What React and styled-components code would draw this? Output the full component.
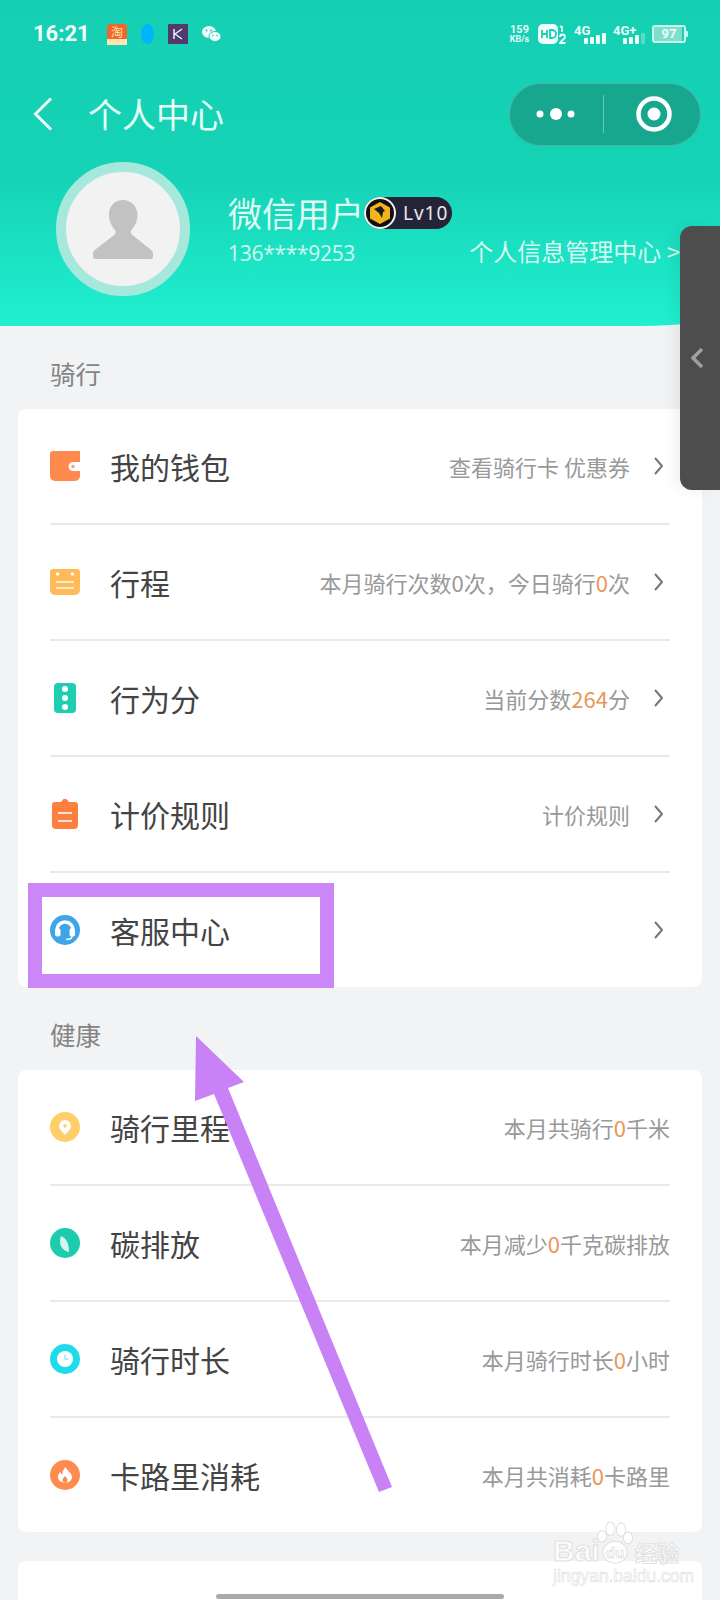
import React from 'react';
import styled, { createGlobalStyle } from 'styled-components';

const Global = createGlobalStyle`
  html, body { margin: 0; padding: 0; background: #f2f3f5; }
  * { box-sizing: border-box; }
`;
const CJK = `"Noto Sans CJK SC", "Noto Sans", sans-serif`;

const Page = styled.div`
  position: relative; width: 720px; height: 1600px; overflow: hidden;
  background: #f2f3f5; font-family: ${CJK};
`;
const Header = styled.header`
  height: 326px; padding-top: 23px;
  background: linear-gradient(180deg, #15cfb3 0%, #16d3b6 55%, #20f0d0 100%);
  border-bottom-right-radius: 80px 14px;
  color: #fff; display: flex; flex-direction: column;
`;
const StatusBar = styled.div`
  height: 22px; padding: 0 32px 0 33px; display: flex; align-items: center; justify-content: space-between;
`;
const StatusGroup = styled.div`display: flex; align-items: center; gap: ${p => p.$gap || 14}px;`;
const Time = styled.span`
  font: 700 22px/22px "Roboto", sans-serif; color: #effcf9; margin-right: 2px; width: 58px;
`;
const Speed = styled.div`
  display: flex; flex-direction: column; align-items: center; width: 23px;
  font: 700 11px/10px "Roboto", sans-serif; color: #e8fbf6;
  small { font-size: 9px; line-height: 9px; }
`;
const Sim = styled.div`
  position: relative; width: 32px; height: 20px;
  font: 700 13px/13px "Roboto", sans-serif; color: #eefcf8;
`;
const SimBars = styled.svg`position: absolute; right: 0; bottom: 0;`;
const Battery = styled.div`
  position: relative; width: 34px; height: 18px; margin-right: 2px; border: 2px solid #c9f5ec; border-radius: 3px;
  background: linear-gradient(90deg, #7fdfcc 0%, #7fdfcc 92%, transparent 92%);
  color: #effcf9; font: 700 13px/14px "Roboto", sans-serif; text-align: center;
  &::after {
    content: ""; position: absolute; right: -4px; top: 4px; width: 2px; height: 6px;
    border-radius: 0 1px 1px 0; background: #c9f5ec;
  }
`;
const Nav = styled.nav`
  margin-top: 38px; height: 62px; padding: 0 19px 0 33px; display: flex; align-items: center;
`;
const NavTitle = styled.h1`
  margin: 0 0 0 35px; font: 400 34px/62px ${CJK}; color: #e6fbf6; flex: 1;
`;
const Capsule = styled.div`
  width: 192px; height: 63px; border-radius: 32px; border: 1px solid rgba(255,255,255,.18);
  background: #17a78f; display: flex; align-items: center; flex: none;
`;
const CapsuleCell = styled.div`
  flex: 1; height: 38px; display: flex; align-items: center; justify-content: center;
  & + & { border-left: 1px solid rgba(255,255,255,.35); padding-left: 4px; }
`;
const Profile = styled.div`
  margin-top: 17px; padding: 0 40px 0 56px; display: flex; align-items: center;
`;
const Avatar = styled.div`
  width: 134px; height: 134px; border-radius: 50%; background: #f2f2f2; border: 10px solid #a6e9dc;
  display: flex; align-items: center; justify-content: center; flex: none;
`;
const Info = styled.div`flex: 1; margin-left: 38px; padding-top: 2px;`;
const NameRow = styled.div`display: flex; align-items: center; height: 40px;`;
const Name = styled.span`font: 400 34px/42px ${CJK}; color: #dff9f3;`;
const Badge = styled.div`
  width: 88px; height: 32px; border-radius: 16px; background: #242338;
  display: flex; align-items: center; position: relative;
`;
const BadgeCoin = styled.svg`flex: none;`;
const BadgeText = styled.span`
  margin-left: 7px; font: 400 19px/32px "Noto Sans", sans-serif; color: #e8e8ee; letter-spacing: 1px;
`;
const SubRow = styled.div`
  display: flex; align-items: center; justify-content: space-between; margin-top: 1px; height: 34px;
`;
const Phone = styled.span`
  margin-top: 5px; font: 400 21px/34px "Noto Sans", sans-serif; letter-spacing: -0.3px; color: #c8f6ec;
`;
const Manage = styled.span`font: 400 24px/34px ${CJK}; color: #d5f8f0; white-space: nowrap; margin-right: 0;`;

const SectionLabel = styled.div`
  height: 83px; padding: 10px 0 0 50px; display: flex; align-items: center;
  font: 400 25.5px/30px ${CJK}; color: #848484;
`;
const Card = styled.section`
  margin: 0 18px; background: #fff; border-radius: 8px; padding: 0 32px;
`;
const Row = styled.div`
  height: ${p => p.$last ? 114 : 116}px; display: flex; align-items: center;
  border-bottom: ${p => p.$last ? 'none' : '2px solid #e9e9e9'};
`;
const IconSlot = styled.div`width: 60px; flex: none; display: flex; align-items: center;`;
const Title = styled.span`font: 400 30px/40px ${CJK}; color: #444; flex: 1;`;
const Detail = styled.span`font: 400 22px/30px ${CJK}; color: #999; white-space: nowrap;`;
const Num = styled.span`color: #e9965a;`;
const Chevron = styled.svg`margin: 0 7px 0 24px; flex: none;`;
const NextCard = styled.section`
  margin: 29px 18px 0; height: 60px; background: #fff; border-radius: 8px 8px 0 0;
`;
const SidePanel = styled.div`
  position: absolute; right: 0; top: 226px; width: 40px; height: 264px; background: #4d4d4d;
  border-radius: 12px 0 0 12px; box-shadow: -6px 0 14px rgba(0,0,0,.06);
  display: flex; align-items: center; padding: 0 0 0 10px;
`;
const Highlight = styled.div`
  position: absolute; left: 28px; top: 883px; width: 306px; height: 105px; border: 14px solid #cb87f8;
`;
const Arrow = styled.svg`position: absolute; left: 0; top: 0; pointer-events: none;`;
const HomeBar = styled.div`
  position: absolute; left: 216px; top: 1594px; width: 288px; height: 5px; border-radius: 3px; background: #aaa;
`;
const Watermark = styled.div`
  position: absolute; left: 552px; top: 1522px; width: 134px; height: 70px;
`;
const WmBrand = styled.span`
  position: absolute; left: 1px; top: 12px; font: 700 30px/34px "Liberation Sans", sans-serif;
  color: rgba(255,255,255,.9); -webkit-text-stroke: 1px #e0e0e0;
`;
const WmDu = styled.span`
  position: absolute; left: 54px; top: 22px; font: 700 15px/18px "Liberation Sans", sans-serif;
  color: rgba(255,255,255,.9); -webkit-text-stroke: .6px #d8d8d8;
`;
const WmCn = styled.span`
  position: absolute; left: 83px; top: 14px; font: 700 22px/30px ${CJK};
  color: rgba(255,255,255,.9); -webkit-text-stroke: 1px #e0e0e0; white-space: nowrap;
`;
const WmUrl = styled.span`
  position: absolute; left: 1px; top: 44px; font: 400 17.5px/20px "Liberation Sans", sans-serif;
  color: rgba(255,255,255,.9); -webkit-text-stroke: .6px #dedede; white-space: nowrap;
`;
const WmPaw = styled.svg`position: absolute; left: 44px; top: 0;`;

const WalletIcon = () => (
  <svg width="30" height="30" viewBox="0 0 30 30">
    <path d="M0 3a3 3 0 0 1 3-3h27v11h-7a4.500 4.500 0 0 0 0 9h7v5a5 5 0 0 1-5 5H5a5 5 0 0 1-5-5z" fill="#ff8a4e" />
    <circle cx="23" cy="15.500" r="1.700" fill="#e9a57f" />
  </svg>
);
const PlanIcon = () => (
  <svg width="30" height="27" viewBox="0 0 30 27">
    <path d="M3 0h24a3 3 0 0 1 3 3v18a5 5 0 0 1-5 5H5a5 5 0 0 1-5-5V3a3 3 0 0 1 3-3z" fill="#ffbb59" />
    <circle cx="7.500" cy="5" r="1.700" fill="#fff" /><circle cx="22.500" cy="5" r="1.700" fill="#fff" />
    <rect x="6" y="12" width="18" height="2" fill="#ffe9c6" /><rect x="6" y="18" width="18" height="2" fill="#ffe9c6" />
  </svg>
);
const ScoreIcon = () => (
  <svg width="30" height="30" viewBox="0 0 30 30">
    <rect x="4" y="0" width="22" height="30" rx="4" fill="#1fcdb0" />
    <circle cx="15" cy="6" r="3" fill="#fff" /><circle cx="15" cy="15" r="3" fill="#fff" /><circle cx="15" cy="24" r="3" fill="#fff" />
  </svg>
);
const ClipIcon = () => (
  <svg width="30" height="30" viewBox="0 0 30 30">
    <path d="M5 3h6l2.500-3h3L19 3h6a3 3 0 0 1 3 3v20a4 4 0 0 1-4 4H6a4 4 0 0 1-4-4V6a3 3 0 0 1 3-3z" fill="#ff7f41" />
    <rect x="8" y="13" width="14" height="2" fill="#ffe3d3" /><rect x="8" y="21" width="14" height="2" fill="#ffe3d3" />
  </svg>
);
const CircleIcon = ({ color, children }) => (
  <svg width="30" height="30" viewBox="0 0 30 30"><circle cx="15" cy="15" r="15" fill={color} />{children}</svg>
);
const Headset = () => (
  <CircleIcon color="#3fa5e8">
    <path d="M7 15a8 8 0 0 1 16 0" fill="none" stroke="#fff" strokeWidth="3.500" />
    <rect x="5" y="13" width="5.500" height="8.500" rx="2.500" fill="#fff" /><rect x="19.500" y="13" width="5.500" height="8.500" rx="2.500" fill="#fff" />
    <path d="M22 21c0 2.500-3 3.500-6 3.500" fill="none" stroke="#fff" strokeWidth="1.500" />
  </CircleIcon>
);
const Pin = () => (
  <CircleIcon color="#ffcd69">
    <path d="M15 23c-3-3.500-6-6-6-9a6 6 0 0 1 12 0c0 3-3 5.500-6 9z" fill="#fff" />
    <circle cx="15" cy="14" r="1.800" fill="#ffcd69" />
  </CircleIcon>
);
const Leaf = () => (
  <CircleIcon color="#1fcbad">
    <path d="M11 8c5 2 8 7 8 16-5-1-9-5-9-10 0-2 0-4 1-6z" fill="#d6f5ee" />
  </CircleIcon>
);
const Clock = () => (
  <CircleIcon color="#1fdcea">
    <circle cx="15" cy="15" r="8" fill="#fff" />
    <path d="M15 10.500V15h3.500" fill="none" stroke="#8fe9f1" strokeWidth="1.300" />
  </CircleIcon>
);
const Flame = () => (
  <CircleIcon color="#ff8b4f">
    <path d="M15.500 7c.6 3 6.500 5.500 6.500 10 0 3.300-2.800 5.500-7 5.500s-7-2.200-7-5.500c0-2.500 1.300-4 2.500-5 .2 1.300.8 2.200 1.700 2.600C12.300 11.800 13.500 9 15.500 7z" fill="#fff" />
    <path d="M15 22.500c-1.500 0-2.500-1-2.500-2.500s1.500-2.500 2.500-4c1 1.500 2.500 2.500 2.500 4s-1 2.500-2.500 2.500z" fill="#ff8b4f" />
  </CircleIcon>
);
const Next = () => (
  <Chevron width="9" height="18" viewBox="0 0 9 18">
    <path d="M1 1l7 8-7 8" fill="none" stroke="#777" strokeWidth="2" />
  </Chevron>
);

const ride = [
  { icon: <WalletIcon />, title: '我的钱包', detail: '查看骑行卡 优惠券' },
  { icon: <PlanIcon />, title: '行程', detail: <>本月骑行次数0次，今日骑行<Num>0</Num>次</> },
  { icon: <ScoreIcon />, title: '行为分', detail: <>当前分数<Num>264</Num>分</> },
  { icon: <ClipIcon />, title: '计价规则', detail: '计价规则' },
  { icon: <Headset />, title: '客服中心', detail: null },
];
const health = [
  { icon: <Pin />, title: '骑行里程', detail: <>本月共骑行<Num>0</Num>千米</> },
  { icon: <Leaf />, title: '碳排放', detail: <>本月减少<Num>0</Num>千克碳排放</> },
  { icon: <Clock />, title: '骑行时长', detail: <>本月骑行时长<Num>0</Num>小时</> },
  { icon: <Flame />, title: '卡路里消耗', detail: <>本月共消耗<Num>0</Num>卡路里</> },
];

const Bars = ({ fade }) => (
  <SimBars width="24" height="11" viewBox="0 0 24 11">
    <rect x="2" y="5" width="4" height="6" rx="1" fill="#eefcf8" />
    <rect x="8" y="4" width="4" height="7" rx="1" fill="#eefcf8" />
    <rect x="14" y="2" width="4" height="9" rx="1" fill="#eefcf8" />
    <rect x="20" y="0" width="4" height="11" rx="1" fill={fade ? '#57dcc5' : '#eefcf8'} />
  </SimBars>
);

export default function App() {
  return (
    <Page>
      <Global />
      <Header>
        <StatusBar>
          <StatusGroup>
            <Time>16:21</Time>
            <svg width="20" height="21" viewBox="0 0 20 21">
              <rect width="20" height="21" rx="3" fill="#f0662e" />
              <rect y="15" width="20" height="6" fill="#ffe6b0" />
              <text x="10" y="13" fontSize="12" textAnchor="middle" fill="#ffe3a8" fontFamily="Noto Sans CJK SC">淘</text>
            </svg>
            <svg width="13" height="20" viewBox="0 0 13 20"><ellipse cx="6.500" cy="10" rx="6.500" ry="10" fill="#00b4ff" /></svg>
            <svg width="20" height="20" viewBox="0 0 20 20">
              <rect width="20" height="20" rx="1" fill="#4f3a6b" />
              <path d="M6 5v10M14 5l-7 5 7 5" fill="none" stroke="#eee" strokeWidth="1.500" />
            </svg>
            <svg width="19" height="16" viewBox="0 0 19 16">
              <ellipse cx="7" cy="6" rx="7" ry="6" fill="#f2fdfb" />
              <ellipse cx="13" cy="10.500" rx="6" ry="5" fill="#f2fdfb" stroke="#16d0b4" strokeWidth="1" />
              <circle cx="4.500" cy="4.500" r="1" fill="#16d0b4" /><circle cx="9" cy="4.500" r="1" fill="#16d0b4" />
              <circle cx="11" cy="9.500" r=".8" fill="#16d0b4" /><circle cx="15" cy="9.500" r=".8" fill="#16d0b4" />
            </svg>
          </StatusGroup>
          <StatusGroup $gap={7}>
            <Speed>159<small>KB/s</small></Speed>
            <svg width="29" height="20" viewBox="0 0 29 20">
              <rect width="20" height="20" rx="5" fill="#f2fdfb" />
              <path d="M4 6v8M9 6v8M4 10h5M12 6v8h2a4 4 0 0 0 0-8z" fill="none" stroke="#16d0b4" strokeWidth="1.800" />
              <path d="M24 2v6M22 3l2-1" fill="none" stroke="#f2fdfb" strokeWidth="1.600" />
              <path d="M22 13a2.500 2.500 0 0 1 5 0c0 2-4 3.500-5 6h5.500" fill="none" stroke="#f2fdfb" strokeWidth="1.800" />
            </svg>
            <Sim>4G<Bars /></Sim>
            <Sim>4G+<Bars fade /></Sim>
            <Battery>97</Battery>
          </StatusGroup>
        </StatusBar>
        <Nav>
          <svg width="20" height="34" viewBox="0 0 20 34">
            <path d="M18 1.500L2.500 17 18 32.500" fill="none" stroke="#f2fdfb" strokeWidth="3" />
          </svg>
          <NavTitle>个人中心</NavTitle>
          <Capsule>
            <CapsuleCell>
              <svg width="44" height="14" viewBox="0 0 44 14">
                <circle cx="6" cy="7" r="3.500" fill="#fff" /><circle cx="22" cy="7" r="6" fill="#fff" /><circle cx="37" cy="7" r="3.500" fill="#fff" />
              </svg>
            </CapsuleCell>
            <CapsuleCell>
              <svg width="36" height="36" viewBox="0 0 36 36">
                <circle cx="18" cy="18" r="15.500" fill="none" stroke="#fff" strokeWidth="4.500" /><circle cx="18" cy="18" r="6.500" fill="#fff" />
              </svg>
            </CapsuleCell>
          </Capsule>
        </Nav>
        <Profile>
          <Avatar>
            <svg width="60" height="59" viewBox="0 0 60 59">
              <path d="M30 0c8 0 14.500 6.500 14.500 15 0 6-2.500 11-6 15-1.500 2-.5 4 1.500 5.500L57 49c2 1.500 3 3 3 5v2c0 2-1 3-3 3H3c-2 0-3-1-3-3v-2c0-2 1-3.500 3-5l17.500-13.500c2-1.500 3-3.500 1.500-5.500-3.500-4-6-9-6-15C15.500 6.500 22 0 30 0z" fill="#c2c2c2" />
            </svg>
          </Avatar>
          <Info>
            <NameRow>
              <Name>微信用户</Name>
              <Badge>
                <BadgeCoin width="32" height="32" viewBox="0 0 32 32">
                  <circle cx="16" cy="16" r="15" fill="#111" stroke="#f2f2f2" strokeWidth="2" />
                  <path d="M16 5l10 5.500v11L16 27 6 21.500v-11z" fill="#f3b41b" />
                  <path d="M10 12l7-3 4 5-2 1-1 6-3-5z" fill="#1b1b22" />
                </BadgeCoin>
                <BadgeText>Lv10</BadgeText>
              </Badge>
            </NameRow>
            <SubRow>
              <Phone>136****9253</Phone>
              <Manage>个人信息管理中心 &gt;</Manage>
            </SubRow>
          </Info>
        </Profile>
      </Header>

      <SectionLabel>骑行</SectionLabel>
      <Card>
        {ride.map((r, i) => (
          <Row key={r.title} $last={i === ride.length - 1}>
            <IconSlot>{r.icon}</IconSlot>
            <Title>{r.title}</Title>
            {r.detail && <Detail>{r.detail}</Detail>}
            <Next />
          </Row>
        ))}
      </Card>
      <SectionLabel>健康</SectionLabel>
      <Card>
        {health.map((r, i) => (
          <Row key={r.title} $last={i === health.length - 1}>
            <IconSlot>{r.icon}</IconSlot>
            <Title>{r.title}</Title>
            <Detail>{r.detail}</Detail>
          </Row>
        ))}
      </Card>
      <NextCard />

      <SidePanel>
        <svg width="14" height="22" viewBox="0 0 14 22">
          <path d="M12 2L3 11l9 9" fill="none" stroke="#a0a0a0" strokeWidth="3.500" />
        </svg>
      </SidePanel>
      <Highlight />
      <Arrow width="720" height="1600" viewBox="0 0 720 1600">
        <polygon points="196,1036 244,1082 228,1088 392,1487 379,1492 214,1094 195,1101" fill="#c981f6" />
      </Arrow>
      <Watermark>
        <WmPaw width="38" height="42" viewBox="0 0 50 50" preserveAspectRatio="none">
          <g fill="rgba(255,255,255,.85)" stroke="#dedede" strokeWidth="1.200">
            <ellipse cx="8" cy="17" rx="6" ry="7" /><ellipse cx="19" cy="8" rx="6" ry="8" />
            <ellipse cx="33" cy="9" rx="6" ry="8" /><ellipse cx="42" cy="19" rx="6" ry="7" />
            <ellipse cx="25" cy="36" rx="16" ry="13" />
          </g>
        </WmPaw>
        <WmBrand>Bai</WmBrand>
        <WmDu>du</WmDu>
        <WmCn>经验</WmCn>
        <WmUrl>jingyan.baidu.com</WmUrl>
      </Watermark>
      <HomeBar />
    </Page>
  );
}
